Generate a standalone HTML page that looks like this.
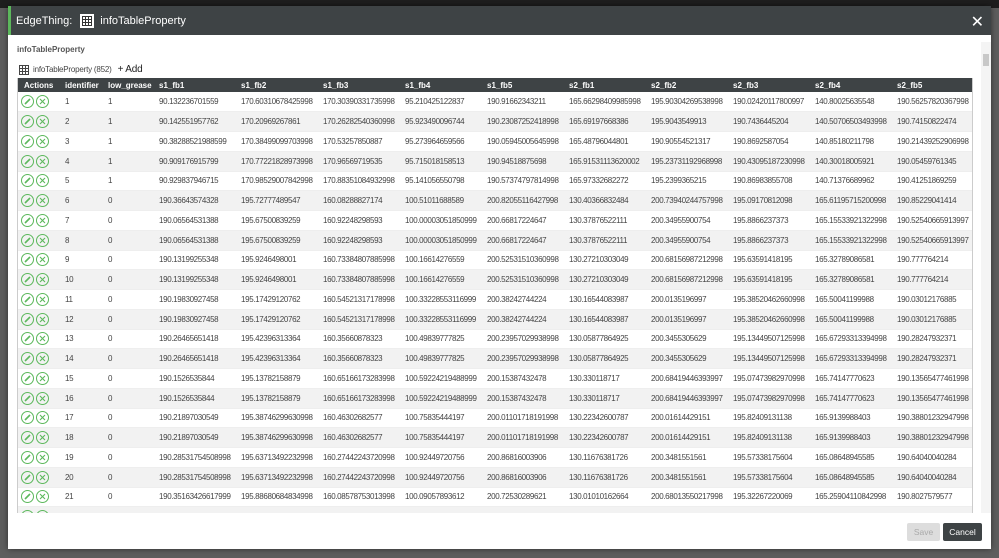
<!DOCTYPE html>
<html><head><meta charset="utf-8"><style>
*{box-sizing:border-box;margin:0;padding:0}
body{width:999px;height:558px;overflow:hidden;background:#5e5e5e;font-family:"Liberation Sans",Arial,sans-serif;position:relative}
.top{position:absolute;left:0;top:0;width:999px;height:8px;background:#1e1e1e}
.modal{position:absolute;left:8px;top:6px;width:983px;height:543px;background:#fff;box-shadow:0 0 6px rgba(0,0,0,.5)}
.hdr{height:29px;background:#3e4345;border-left:3px solid #5cb85c;color:#fff;font-size:11px;display:flex;align-items:center;padding-left:5px}
.hdr .ic{width:14px;height:14px;background:#fff;margin:0 6px 0 8px;display:inline-flex;align-items:center;justify-content:center}
.close{position:absolute;right:7px;top:6px;color:#fff;font-size:16px}
.lbl{position:absolute;left:9px;top:39px;font-size:8px;color:#555;font-weight:bold}
.tb{position:absolute;left:11px;top:58px;font-size:8px;color:#444;display:flex;align-items:center;letter-spacing:-0.2px}
.tb b{font-weight:normal;font-size:10px;color:#222;margin-left:6px}
.wrap{position:absolute;left:9px;top:72px;width:956px;height:435px;overflow:hidden;border-left:1px solid #ccc;border-right:1px solid #ccc}
table{border-collapse:collapse;font-size:8px;color:#444;table-layout:fixed;width:956px;letter-spacing:-0.35px}
th{background:#3e4345;color:#fff;text-align:left;height:14px;font-size:8px;padding-left:6px;letter-spacing:0}
td{height:19.75px;padding-left:6px;white-space:nowrap;overflow:hidden;text-overflow:clip;border-bottom:1px solid #eee}
tr:nth-child(even) td{background:#f2f2f2}
.ci{display:inline-block;width:13px;height:13px;border:1px solid #5cb85c;border-radius:50%;vertical-align:middle;position:relative;margin-right:2px}
.sb{position:absolute;left:973px;top:36px;width:10px;height:471px;background:#f4f4f4}
.sb i{position:absolute;left:2px;top:12px;width:6px;height:12px;background:#c8c8c8}
.btn{position:absolute;top:517px;height:18px;font-size:8.5px;display:flex;align-items:center;justify-content:center;border-radius:2px}
</style></head><body>
<div class="top"></div>
<div class="modal">
<div class="hdr">EdgeThing:<span class="ic"><svg width="10" height="10"><rect x="0.5" y="0.5" width="9" height="9" fill="none" stroke="#333"/><path d="M0 3.5H10M0 6.5H10M3.5 0V10M6.5 0V10" stroke="#333"/></svg></span>infoTableProperty</div>
<div class="close">✕</div>
<div class="lbl">infoTableProperty</div>
<div class="tb"><svg width="10" height="10"><rect x="0.5" y="0.5" width="9" height="9" fill="none" stroke="#444"/><path d="M0 3.5H10M0 6.5H10M3.5 0V10M6.5 0V10" stroke="#444"/></svg>&nbsp;&nbsp;infoTableProperty (852)<b>+ Add</b></div>
<div class="wrap"><table>
<colgroup><col style="width:41px"><col style="width:43px"><col style="width:51px"><col span="9" style="width:82px"><col style="width:83px"></colgroup>
<tr><th>Actions</th><th>identifier</th><th>low_grease</th><th>s1_fb1</th><th>s1_fb2</th><th>s1_fb3</th><th>s1_fb4</th><th>s1_fb5</th><th>s2_fb1</th><th>s2_fb2</th><th>s2_fb3</th><th>s2_fb4</th><th>s2_fb5</th></tr>
<tbody id="b"></tbody></table></div>
<div class="sb"><i></i></div>
<div class="btn" style="left:899px;width:33px;background:#ddd;color:#aaa">Save</div>
<div class="btn" style="left:935px;width:39px;background:#3e4345;color:#fff">Cancel</div>
</div>
<script>
var d=[
["90.132236701559","170.60310678425998","170.30390331735998","95.210425122837","190.91662343211","165.66298409985998","195.90304269538998","190.02420117800997","140.80025635548","190.56257820367998"],
["90.142551957762","170.20969267861","170.26282540360998","95.923490096744","190.23087252418998","165.69197668386","195.9043549913","190.7436445204","140.50706503493998","190.74150822474"],
["90.38288521988599","170.38499099703998","170.53257850887","95.273964659566","190.05945005645998","165.48796044801","190.90554521317","190.8692587054","140.85180211798","190.21439252906998"],
["90.909176915799","170.77221828973998","170.96569719535","95.715018158513","190.94518875698","165.91531113620002","195.23731192968998","190.43095187230998","140.30018005921","190.05459761345"],
["90.929837946715","170.98529007842998","170.88351084932998","95.141056550798","190.57374797814998","165.97332682272","195.2399365215","190.86983855708","140.71376689962","190.41251869259"],
["190.36643574328","195.72777489547","160.08288827174","100.51011688589","200.82055116427998","130.40366832484","200.73940244757998","195.09170812098","165.61195715200998","190.85229041414"],
["190.06564531388","195.67500839259","160.92248298593","100.00003051850999","200.66817224647","130.37876522111","200.34955900754","195.8866237373","165.15533921322998","190.52540665913997"],
0,
["190.13199255348","195.9246498001","160.73384807885998","100.16614276559","200.52531510360998","130.27210303049","200.68156987212998","195.63591418195","165.32789086581","190.777764214"],
0,
["190.19830927458","195.17429120762","160.54521317178998","100.33228553116999","200.38242744224","130.16544083987","200.0135196997","195.38520462660998","165.50041199988","190.03012176885"],
0,
["190.26465651418","195.42396313364","160.35660878323","100.49839777825","200.23957029938998","130.05877864925","200.3455305629","195.13449507125998","165.67293313394998","190.28247932371"],
0,
["190.1526535844","195.13782158879","160.65166173283998","100.59224219488999","200.15387432478","130.330118717","200.68419446393997","195.07473982970998","165.74147770623","190.13565477461998"],
0,
["190.21897030549","195.38746299630998","160.46302682577","100.75835444197","200.01101718191998","130.22342600787","200.01614429151","195.82409131138","165.9139988403","190.38801232947998"],
0,
["190.28531754508998","195.63713492232998","160.27442243720998","100.92449720756","200.86816003906","130.11676381726","200.3481551561","195.57338175604","165.08648945585","190.64040040284"],
0,
["190.35163426617999","195.88680684834998","160.08578753013998","100.09057893612","200.72530289621","130.01010162664","200.68013550217998","195.32267220069","165.25904110842998","190.8027579577"],
["190.35163426617999","195.88680684834998","160.08578753013998","100.09057893612","200.72530289621","130.01010162664","200.68013550217998","195.32267220069","165.25904110842998","190.8027579577"]];
var ic='<span class="ci"><svg width="11" height="11" style="position:absolute;left:0;top:0"><path d="M3 8L8 3" stroke="#5cb85c" stroke-width="1.6"/></svg></span><span class="ci"><svg width="11" height="11" style="position:absolute;left:0;top:0"><path d="M3 3L8 8M8 3L3 8" stroke="#5cb85c" stroke-width="1.1"/></svg></span>';
var h='',p;
for(var i=0;i<d.length;i++){var r=d[i]||p;p=r;h+='<tr><td style="padding-left:3px">'+ic+'</td><td>'+(i+1)+'</td><td>'+(i<5?1:0)+'</td><td>'+r.join('</td><td>')+'</td></tr>';}
document.getElementById('b').innerHTML=h;
</script>
</body></html>
